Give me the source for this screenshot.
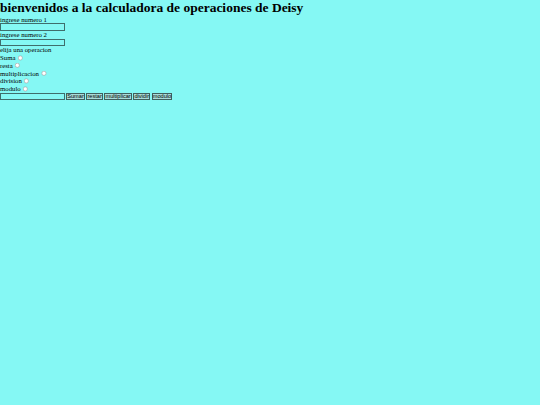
import React from "react";

const inputCls =
  "w-[153px] h-[18px] border-2 border-[#3f6e6c] bg-transparent px-[2px] align-top font-['Liberation_Sans',sans-serif] text-[13.333px]";
const buttonCls =
  "h-[18px] border-2 border-[#3f5f5d] bg-[#a9dcd9] px-0 font-['Liberation_Sans',sans-serif] text-[13.333px] leading-[14px] align-top";
const radioCls = "ml-[5px] mr-[3px] my-0 align-[-1px] w-[13px] h-[13px]";

const ops = ["Suma", "resta", "multiplicacion", "division", "modulo"];
const buttons = ["Sumar", "restar", "multiplicar", "dividir", "modulo"];

export default function App() {
  return (
    <div className="min-h-screen bg-[#85f8f4]">
      <div className="[zoom:0.421875] w-[1280px] font-['Liberation_Serif',serif] text-[16px] leading-[18.3px] text-black">
        <h1 className="text-[32px] font-bold leading-[37px]">
          bienvenidos a la calculadora de operaciones de Deisy
        </h1>
        <div className="h-[18.3px]">ingrese numero 1</div>
        <div className="h-[18.3px]">
          <input type="text" className={inputCls} />
        </div>
        <div className="h-[18.3px]">ingrese numero 2</div>
        <div className="h-[18.3px]">
          <input type="text" className={inputCls} />
        </div>
        <div className="h-[18.3px]">elija una operacion</div>
        {ops.map((o) => (
          <div key={o} className="h-[18.3px]">
            {o}
            <input type="radio" name="op" className={radioCls} />
          </div>
        ))}
        <div className="h-[18.3px] whitespace-nowrap">
          <input type="text" className={inputCls} />{" "}
          {buttons.map((b) => (
            <React.Fragment key={b}>
              <button className={buttonCls}>{b}</button>{" "}
            </React.Fragment>
          ))}
        </div>
      </div>
    </div>
  );
}
